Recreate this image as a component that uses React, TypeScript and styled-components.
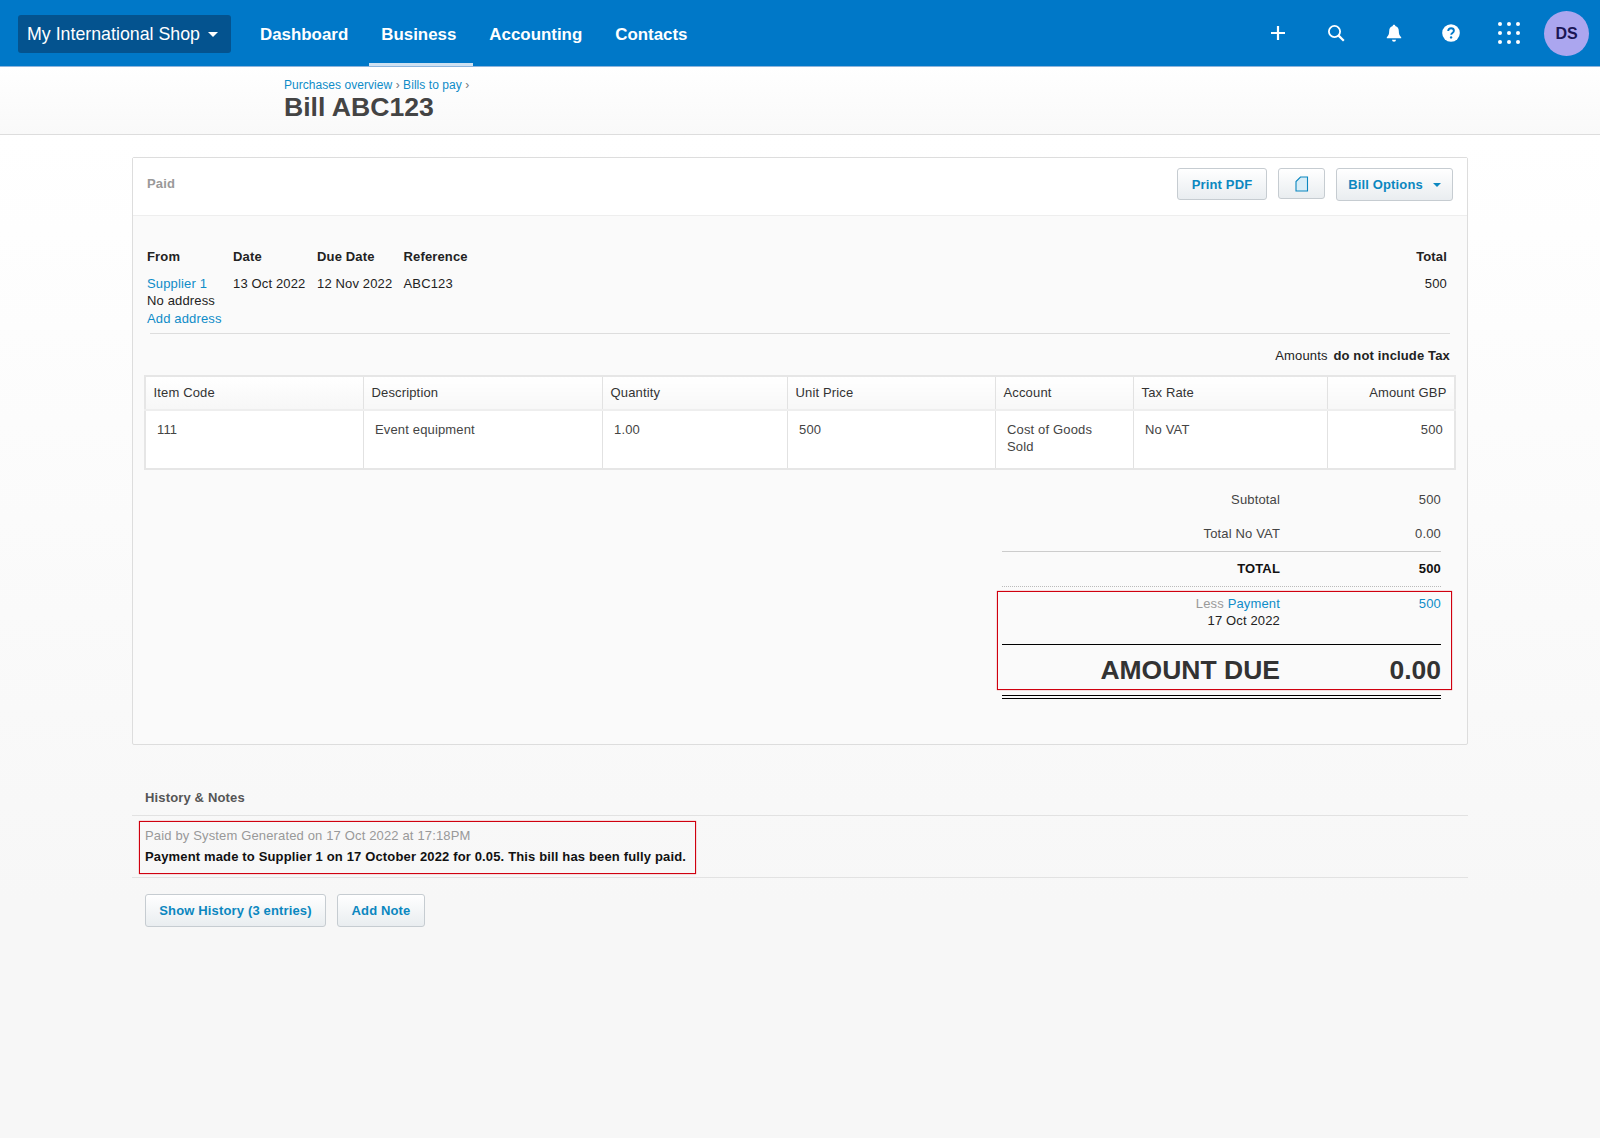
import React from "react";
import styled, { createGlobalStyle } from "styled-components";

const GlobalStyle = createGlobalStyle`
  html, body {
    margin: 0;
    padding: 0;
    background: #f7f7f7;
    font-family: "Liberation Sans", Arial, sans-serif;
    font-size: 13px;
    line-height: 17px;
    letter-spacing: 0.15px;
    color: #222;
  }
  * { box-sizing: border-box; }
`;

const Page = styled.div`
  min-height: 1138px;
  background: linear-gradient(#fff 135px, #f7f7f7 900px);
`;

const Nav = styled.header`
  display: flex;
  align-items: center;
  gap: 4px;
  height: 67px;
  padding: 0 11px 0 18px;
  background: #0078c8;
  border-bottom: 1px solid #8db4dc;
  letter-spacing: 0;
`;

const ShopButton = styled.div`
  display: flex;
  align-items: center;
  width: 213px;
  height: 38px;
  margin: 1px 13px 0 0;
  padding: 1px 0 0 9px;
  border-radius: 3px;
  background: #04538f;
  color: #fff;
  font-size: 17.8px;
`;

const Caret = styled.span<{ $color: string; $size: number; $gap: number }>`
  display: inline-block;
  margin-left: ${(p) => p.$gap}px;
  border-left: ${(p) => p.$size}px solid transparent;
  border-right: ${(p) => p.$size}px solid transparent;
  border-top: ${(p) => p.$size}px solid ${(p) => p.$color};
`;

const NavLink = styled.a<{ $active?: boolean }>`
  display: flex;
  align-items: center;
  height: 66px;
  padding: 5px 17px 0 12px;
  color: #fff;
  font-size: 16.9px;
  font-weight: bold;
  border-bottom: 3px solid ${(p) => (p.$active ? "#cfe1f2" : "transparent")};
`;

const NavIcons = styled.div`
  display: flex;
  align-items: center;
  margin-left: auto;
`;

const IconSlot = styled.span`
  display: flex;
  align-items: center;
  justify-content: center;
  width: 57.7px;
  color: #fff;
`;

const Avatar = styled.div`
  display: flex;
  align-items: center;
  justify-content: center;
  width: 45px;
  height: 45px;
  margin-left: 6px;
  border-radius: 50%;
  background: #aba6ef;
  color: #1b1655;
  font-size: 16px;
  font-weight: bold;
`;

const TitleBar = styled.div`
  height: 68px;
  padding: 10px 0 0 284px;
  background: linear-gradient(#fff, #f9f9f9);
  border-bottom: 1px solid #ddd;
`;

const Crumbs = styled.div`
  font-size: 12px;
  line-height: 16px;
  letter-spacing: 0.05px;
  color: #777;
`;

const Link = styled.a`
  color: #0e8cc8;
`;

const Title = styled.h1`
  margin: 0;
  font-size: 26.6px;
  line-height: 28px;
  font-weight: bold;
  letter-spacing: 0;
  color: #444;
`;

const Main = styled.main`
  padding: 22px 132px 0;
`;

const Card = styled.section`
  height: 588px;
  border: 1px solid #ddd;
  border-radius: 2px;
  background: #fafafa;
`;

const CardHead = styled.div`
  display: flex;
  align-items: flex-start;
  height: 58px;
  padding: 10px 14px 0 14px;
  background: #fff;
  border-bottom: 1px solid #eee;
`;

const Status = styled.div`
  margin-right: auto;
  padding-top: 7px;
  font-weight: bold;
  color: #999;
`;

const Button = styled.button<{ $height?: number; $width: number }>`
  display: inline-flex;
  align-items: center;
  justify-content: center;
  width: ${(p) => p.$width}px;
  height: ${(p) => p.$height ?? 32}px;
  margin-left: 11px;
  padding: 0;
  border: 1px solid #c6ccd1;
  border-radius: 3px;
  background: linear-gradient(#fff, #e9edf0);
  color: #0b87c0;
  font-family: inherit;
  font-size: 13px;
  font-weight: bold;
  letter-spacing: 0.15px;
`;

const InfoGrid = styled.div`
  display: grid;
  grid-template-columns: 86px 84px 86.5px 1fr auto;
  row-gap: 9.5px;
  padding: 32px 20px 0 14px;
`;

const InfoHead = styled.div<{ $right?: boolean }>`
  font-weight: bold;
  text-align: ${(p) => (p.$right ? "right" : "left")};
`;

const InfoCell = styled.div<{ $right?: boolean }>`
  line-height: 17.5px;
  text-align: ${(p) => (p.$right ? "right" : "left")};
`;

const Divider = styled.div`
  height: 1px;
  margin: 6px 17px 0;
  background: #ddd;
`;

const TaxNote = styled.div`
  margin: 13px 17px 11px 0;
  text-align: right;
`;

const TaxStrong = styled.b`
  margin-left: 2px;
`;

const Table = styled.table`
  width: 1310px;
  margin-left: 10.5px;
  border-collapse: collapse;
  table-layout: fixed;
  background: #fff;
  border: 2px solid #e6e6e6;
`;

const Th = styled.th<{ $right?: boolean }>`
  height: 34px;
  padding: 0 ${(p) => (p.$right ? "7px" : "8px")} 2px 8px;
  border-left: 1px solid #e2e2e2;
  border-bottom: 2px solid #eee;
  background: linear-gradient(#fff, #f7f7f7);
  font-weight: normal;
  text-align: ${(p) => (p.$right ? "right" : "left")};
  color: #333;
`;

const Td = styled.td<{ $right?: boolean }>`
  height: 59px;
  padding: 10px ${(p) => (p.$right ? "10.5px" : "24px")} 0 11.5px;
  border-left: 1px solid #e2e2e2;
  vertical-align: top;
  text-align: ${(p) => (p.$right ? "right" : "left")};
  color: #444;
`;

const Totals = styled.div`
  width: 439px;
  margin: 13px 0 0 869px;
`;

const TotalRow = styled.div<{ $h: number; $line?: string; $strong?: boolean }>`
  display: grid;
  grid-template-columns: 278px 161px;
  align-items: center;
  height: ${(p) => p.$h}px;
  padding-bottom: 2px;
  border-bottom: ${(p) => p.$line ?? "none"};
  font-weight: ${(p) => (p.$strong ? "bold" : "normal")};
  text-align: right;
  color: ${(p) => (p.$strong ? "#111" : "#444")};
`;

const Highlight = styled.div`
  margin: 4px -11px 0 -5px;
  padding: 0 10px 0 4px;
  height: 99px;
  border: 1px solid #d0000f;
  box-shadow: 0 0 1px rgba(208, 0, 15, 0.7);
`;

const PaymentRow = styled.div`
  display: grid;
  grid-template-columns: 278px 161px;
  height: 49px;
  padding-top: 3px;
  text-align: right;
  line-height: 17px;
  border-bottom: 1px solid #000;
  box-sizing: content-box;
`;

const Muted = styled.span`
  color: #999;
`;

const DueRow = styled.div`
  display: grid;
  grid-template-columns: 278px 161px;
  align-items: center;
  height: 44px;
  padding-top: 5px;
  text-align: right;
  font-size: 26.5px;
  line-height: 30px;
  font-weight: bold;
  letter-spacing: 0;
  color: #333;
`;

const DoubleRule = styled.div`
  height: 4px;
  margin-top: 5px;
  border-bottom: 4px double #000;
`;

const History = styled.section`
  margin-top: 44px;
`;

const HistoryHead = styled.h2`
  margin: 0;
  padding: 0 0 9px 13px;
  font-size: 13px;
  line-height: 17px;
  font-weight: bold;
  color: #555;
  border-bottom: 1px solid #e2e2e2;
`;

const Entry = styled.div`
  height: 62px;
  padding-top: 5px;
  border-bottom: 1px solid #e2e2e2;
`;

const EntryBox = styled.div`
  width: 557px;
  height: 53px;
  margin-left: 7px;
  padding: 4px 0 0 5px;
  border: 1px solid #d0000f;
  box-shadow: 0 0 1px rgba(208, 0, 15, 0.7);
`;

const EntryMeta = styled.div`
  line-height: 20px;
  color: #999;
`;

const EntryText = styled.div`
  line-height: 21px;
  font-weight: bold;
  color: #111;
`;

const HistoryActions = styled.div`
  display: flex;
  padding: 16px 0 0 2px;
`;

const columns = [218.5, 239, 185, 208, 138, 194, 127.5];

const Plus = () => (
  <svg width="16" height="16" viewBox="0 0 16 16" fill="none" stroke="currentColor" strokeWidth="2.2">
    <path d="M8 1v14M1 8h14" />
  </svg>
);

const Search = () => (
  <svg width="18" height="18" viewBox="0 0 18 18" fill="none" stroke="currentColor" strokeWidth="1.8">
    <circle cx="7.5" cy="7.5" r="5.6" />
    <path d="M11.6 11.6l5.2 5.2" strokeWidth="2.2" />
  </svg>
);

const Bell = () => (
  <svg width="16" height="18" viewBox="0 0 16 18" fill="currentColor">
    <path d="M8 0.8c.8 0 1.3.5 1.3 1.2 2.3.6 3.5 2.4 3.5 5 0 3.1.8 4.6 2.4 6.2v1H.8v-1C2.400 11.600 3.200 10.100 3.200 7c0-2.600 1.200-4.400 3.500-5 0-.7.5-1.200 1.300-1.200z" />
    <path d="M6 15.800h4a2 2 0 0 1-4 0z" />
  </svg>
);

const Help = () => (
  <svg width="18" height="18" viewBox="0 0 18 18">
    <circle cx="9" cy="9" r="8.800" fill="currentColor" />
    <path d="M6.200 7c0-1.700 1.200-2.800 2.900-2.800s2.800 1 2.800 2.500c0 2.300-2.700 2.300-2.700 4.100" fill="none" stroke="#0078c8" strokeWidth="1.900" />
    <circle cx="9.100" cy="13.400" r="1.200" fill="#0078c8" />
  </svg>
);

const Dots = () => (
  <svg width="22" height="22" viewBox="0 0 22 22" fill="currentColor">
    {[2, 11, 20].flatMap((y) =>
      [2, 11, 20].map((x) => <circle key={`${x}-${y}`} cx={x} cy={y} r="2" />)
    )}
  </svg>
);

const PageIcon = () => (
  <svg width="14" height="16" viewBox="0 0 14 16" fill="#d8edf7" stroke="#0b87c0" strokeWidth="1.100">
    <path d="M1 15V5.500L5.500 1H12.500V15z" />
  </svg>
);

export default function App() {
  return (
    <Page>
      <GlobalStyle />
      <Nav>
        <ShopButton>
          My International Shop
          <Caret $color="#fff" $size={5} $gap={8} />
        </ShopButton>
        <NavLink>Dashboard</NavLink>
        <NavLink $active>Business</NavLink>
        <NavLink>Accounting</NavLink>
        <NavLink>Contacts</NavLink>
        <NavIcons>
          <IconSlot><Plus /></IconSlot>
          <IconSlot><Search /></IconSlot>
          <IconSlot><Bell /></IconSlot>
          <IconSlot><Help /></IconSlot>
          <IconSlot><Dots /></IconSlot>
          <Avatar>DS</Avatar>
        </NavIcons>
      </Nav>
      <TitleBar>
        <Crumbs>
          <Link>Purchases overview</Link> › <Link>Bills to pay</Link> ›
        </Crumbs>
        <Title>Bill ABC123</Title>
      </TitleBar>
      <Main>
        <Card>
          <CardHead>
            <Status>Paid</Status>
            <Button $width={90}>Print PDF</Button>
            <Button $width={47} $height={31}><PageIcon /></Button>
            <Button $width={117} $height={33}>
              Bill Options
              <Caret $color="#0b87c0" $size={4} $gap={10} />
            </Button>
          </CardHead>
          <InfoGrid>
            <InfoHead>From</InfoHead>
            <InfoHead>Date</InfoHead>
            <InfoHead>Due Date</InfoHead>
            <InfoHead>Reference</InfoHead>
            <InfoHead $right>Total</InfoHead>
            <InfoCell>
              <Link>Supplier 1</Link>
              <br />
              No address
              <br />
              <Link>Add address</Link>
            </InfoCell>
            <InfoCell>13 Oct 2022</InfoCell>
            <InfoCell>12 Nov 2022</InfoCell>
            <InfoCell>ABC123</InfoCell>
            <InfoCell $right>500</InfoCell>
          </InfoGrid>
          <Divider />
          <TaxNote>
            Amounts <TaxStrong>do not include Tax</TaxStrong>
          </TaxNote>
          <Table>
            <colgroup>
              {columns.map((w) => (
                <col key={w} width={w} />
              ))}
            </colgroup>
            <thead>
              <tr>
                <Th>Item Code</Th>
                <Th>Description</Th>
                <Th>Quantity</Th>
                <Th>Unit Price</Th>
                <Th>Account</Th>
                <Th>Tax Rate</Th>
                <Th $right>Amount GBP</Th>
              </tr>
            </thead>
            <tbody>
              <tr>
                <Td>111</Td>
                <Td>Event equipment</Td>
                <Td>1.00</Td>
                <Td>500</Td>
                <Td>Cost of Goods Sold</Td>
                <Td>No VAT</Td>
                <Td $right>500</Td>
              </tr>
            </tbody>
          </Table>
          <Totals>
            <TotalRow $h={34}>
              <span>Subtotal</span>
              <span>500</span>
            </TotalRow>
            <TotalRow $h={35} $line="1px solid #ccc">
              <span>Total No VAT</span>
              <span>0.00</span>
            </TotalRow>
            <TotalRow $h={35} $line="1px dotted #bbb" $strong>
              <span>TOTAL</span>
              <span>500</span>
            </TotalRow>
            <Highlight>
              <PaymentRow>
                <div>
                  <Muted>Less </Muted>
                  <Link>Payment</Link>
                  <br />
                  17 Oct 2022
                </div>
                <Link>500</Link>
              </PaymentRow>
              <DueRow>
                <span>AMOUNT DUE</span>
                <span>0.00</span>
              </DueRow>
            </Highlight>
            <DoubleRule />
          </Totals>
        </Card>
        <History>
          <HistoryHead>History &amp; Notes</HistoryHead>
          <Entry>
            <EntryBox>
              <EntryMeta>Paid by System Generated on 17 Oct 2022 at 17:18PM</EntryMeta>
              <EntryText>Payment made to Supplier 1 on 17 October 2022 for 0.05. This bill has been fully paid.</EntryText>
            </EntryBox>
          </Entry>
          <HistoryActions>
            <Button $width={181} $height={33}>Show History (3 entries)</Button>
            <Button $width={88} $height={33}>Add Note</Button>
          </HistoryActions>
        </History>
      </Main>
    </Page>
  );
}
